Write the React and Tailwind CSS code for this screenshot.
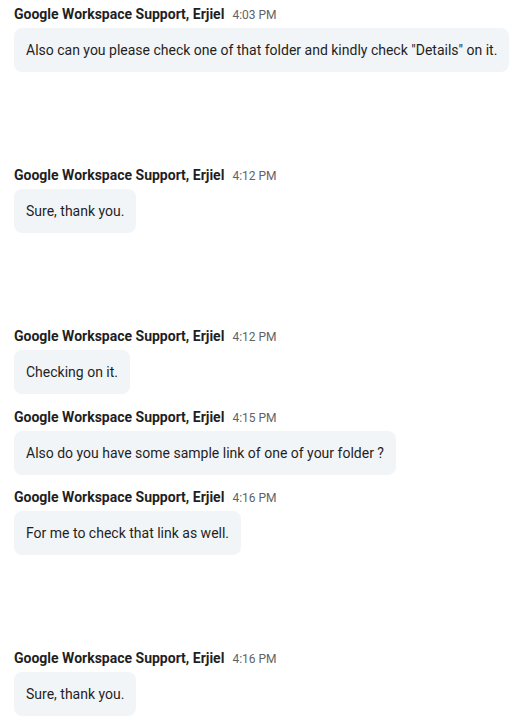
import React from 'react';

// Chat transcript — Google Workspace Support messages.
// null entries are empty slots (hidden messages) that keep their spacing.
const MESSAGES = [
    { time: '4:03 PM', text: 'Also can you please check one of that folder and kindly check "Details" on it.' },
    null,
    { time: '4:12 PM', text: 'Sure, thank you.' },
    null,
    { time: '4:12 PM', text: 'Checking on it.' },
    { time: '4:15 PM', text: 'Also do you have some sample link of one of your folder ?' },
    { time: '4:16 PM', text: 'For me to check that link as well.' },
    null,
    { time: '4:16 PM', text: 'Sure, thank you.' },
];

const SENDER = 'Google Workspace Support, Erjiel';

const Message = ({ time, text }) => (
    <div className="flex flex-col items-start h-[80.5px]">
        <div className="flex items-baseline gap-2 h-5 leading-5">
            <span className="text-[14px] font-bold text-[#1f1f1f]">{SENDER}</span>
            <span className="text-[12px] text-[#5f6368]">{time}</span>
        </div>
        <div className="mt-1 bg-[#f2f5f8] rounded-lg px-3 py-3 text-[14px] leading-5 text-[#1f1f1f]">
            {text}
        </div>
    </div>
);

export default function App() {
    return (
        <div
            className="w-[524px] h-[721px] bg-white overflow-hidden px-[14px] pt-1"
            style={{ fontFamily: 'Roboto, "Liberation Sans", sans-serif' }}
        >
            {MESSAGES.map((m, i) =>
                m ? <Message key={i} {...m} /> : <div key={i} className="h-[80.5px]" />
            )}
        </div>
    );
}
